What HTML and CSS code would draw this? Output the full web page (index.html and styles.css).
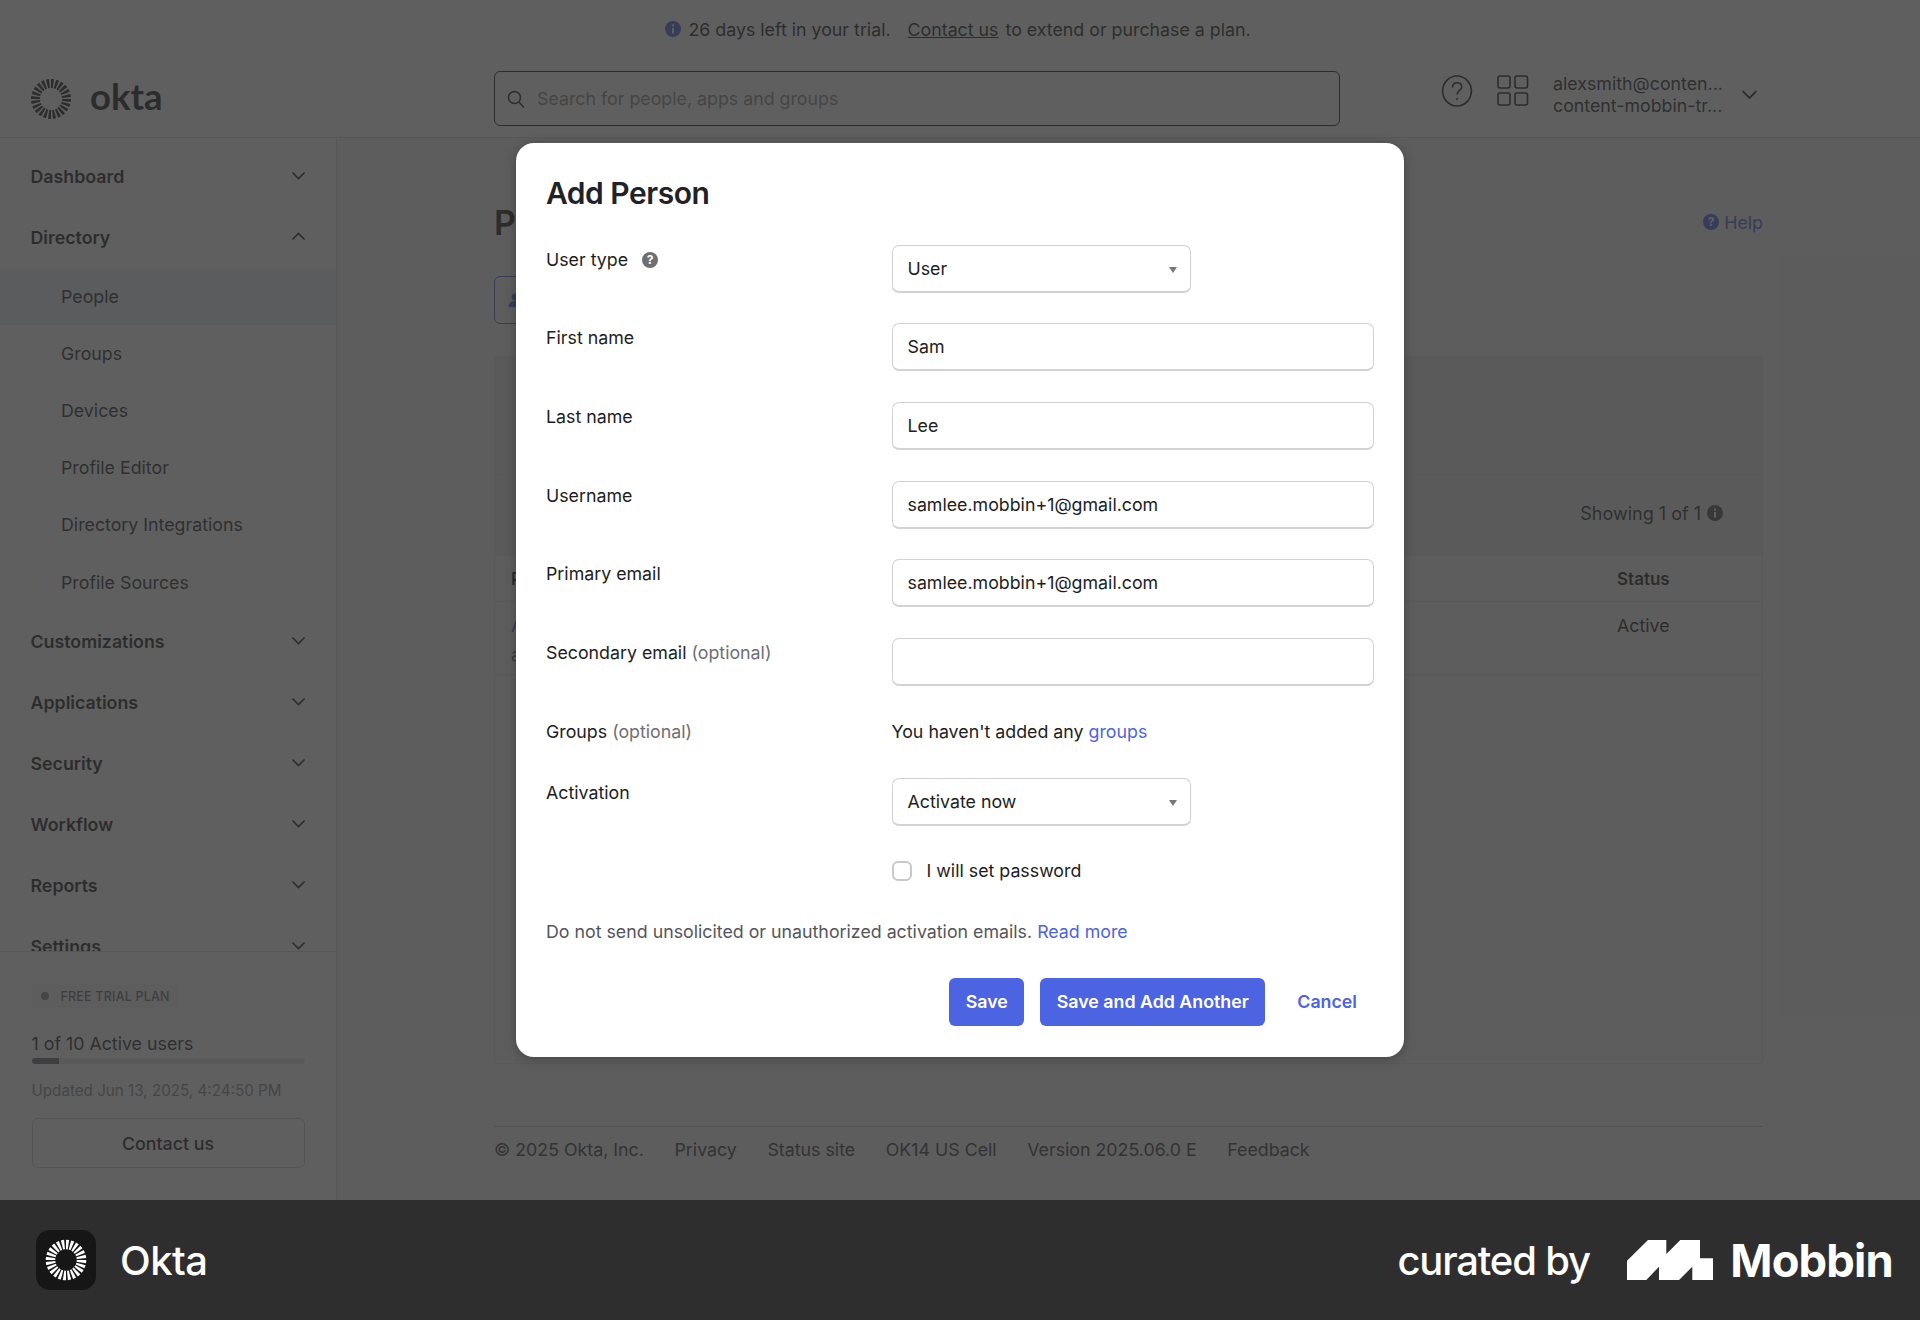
FILE: index.html
```html
<!DOCTYPE html>
<html lang="en">
<head>
<meta charset="utf-8">
<title>Okta - Add Person</title>
<link rel="stylesheet" href="styles.css">
</head>
<body>
<div class="app">
  <div class="banner"><svg class="ic16" viewBox="0 0 16 16"><circle cx="8" cy="8" r="8" fill="#4c64e2"/><rect x="7" y="7" width="2" height="5.500" fill="#fff"/><rect x="7" y="3.500" width="2" height="2" fill="#fff"/></svg><span>26 days left in your trial.</span><a class="banner-link">Contact us</a><span class="banner-tail">to extend or purchase a plan.</span></div>
  <header class="topbar">
    <div class="brand">
      <svg class="sun" viewBox="0 0 42 42"><circle cx="21" cy="21" r="15.500" fill="none" stroke="#1d1d21" stroke-width="9" pathLength="96" stroke-dasharray="2.400 1.600"/></svg>
      <span class="wordmark">okta</span>
    </div>
    <div class="search">
      <svg class="search-ic" viewBox="0 0 20 20" fill="none" stroke="#1d1d21" stroke-width="1.500"><circle cx="8.500" cy="8.500" r="6"/><path d="M13 13l5 5.500"/></svg>
      <span>Search for people, apps and groups</span>
    </div>
    <div class="top-right">
      <svg class="help-ic" viewBox="0 0 32 32" fill="none" stroke="#1d1d21" stroke-width="1.600"><ellipse cx="16" cy="16" rx="14.400" ry="15"/><path d="M11.500 12.500c0-3 2-4.800 4.700-4.800s4.500 1.800 4.500 4.200c0 3.600-4.600 3.600-4.600 7.600"/><circle cx="16" cy="24" r="1" fill="#1d1d21" stroke="none"/></svg>
      <svg class="grid-ic" viewBox="0 0 32 32" fill="none" stroke="#1d1d21" stroke-width="1.600"><rect x="1" y="1" width="12" height="12" rx="2"/><rect x="18" y="1" width="12.500" height="12" rx="2"/><rect x="1" y="18" width="12" height="12" rx="2"/><rect x="18" y="18" width="12.500" height="12" rx="2"/></svg>
      <div class="account"><div>alexsmith@conten...</div><div>content-mobbin-tr...</div></div>
      <svg class="chev chev-top" viewBox="0 0 14 14"><path d="M2 4.500l5 5 5-5"/></svg>
    </div>
  </header>
  <div class="body">
    <aside class="sidebar">
      <nav class="nav">
        <div class="nav-sec"><span>Dashboard</span><svg class="chev" viewBox="0 0 14 14"><path d="M2 4.500l5 5 5-5"/></svg></div>
        <div class="nav-sec"><span>Directory</span><svg class="chev" viewBox="0 0 14 14"><path d="M2 9.500l5-5 5 5"/></svg></div>
        <div class="nav-sub is-active">People</div>
        <div class="nav-sub">Groups</div>
        <div class="nav-sub">Devices</div>
        <div class="nav-sub">Profile Editor</div>
        <div class="nav-sub">Directory Integrations</div>
        <div class="nav-sub">Profile Sources</div>
        <div class="nav-sec"><span>Customizations</span><svg class="chev" viewBox="0 0 14 14"><path d="M2 4.500l5 5 5-5"/></svg></div>
        <div class="nav-sec"><span>Applications</span><svg class="chev" viewBox="0 0 14 14"><path d="M2 4.500l5 5 5-5"/></svg></div>
        <div class="nav-sec"><span>Security</span><svg class="chev" viewBox="0 0 14 14"><path d="M2 4.500l5 5 5-5"/></svg></div>
        <div class="nav-sec"><span>Workflow</span><svg class="chev" viewBox="0 0 14 14"><path d="M2 4.500l5 5 5-5"/></svg></div>
        <div class="nav-sec"><span>Reports</span><svg class="chev" viewBox="0 0 14 14"><path d="M2 4.500l5 5 5-5"/></svg></div>
        <div class="nav-sec"><span>Settings</span><svg class="chev" viewBox="0 0 14 14"><path d="M2 4.500l5 5 5-5"/></svg></div>
      </nav>
      <div class="plan">
        <div class="pill"><i class="pill-dot"></i>FREE TRIAL PLAN</div>
        <div class="plan-count">1 of 10 Active users</div>
        <div class="bar"><div class="bar-fill"></div></div>
        <div class="plan-date">Updated Jun 13, 2025, 4:24:50 PM</div>
        <div class="plan-btn">Contact us</div>
      </div>
    </aside>
    <main class="content">
      <div class="page-head">
        <h1 class="page-title">People</h1>
        <a class="page-help"><svg class="ic16" viewBox="0 0 16 16"><circle cx="8" cy="8" r="8" fill="#4c64e2"/><text x="8" y="11.600" text-anchor="middle" class="q">?</text></svg>Help</a>
      </div>
      <div class="add-btn"><svg class="ic16" viewBox="0 0 16 16"><circle cx="8" cy="5" r="3.400" fill="#4c64e2"/><path d="M1.500 15c0-4 3-6 6.500-6s6.500 2 6.500 6z" fill="#4c64e2"/></svg>Add person</div>
      <section class="card">
        <div class="card-top"></div>
        <div class="card-status">
          <span>Showing 1 of 1</span>
          <svg class="ic16" viewBox="0 0 16 16"><circle cx="8" cy="8" r="8" fill="#1d1d21" opacity=".75"/><rect x="7" y="7" width="2" height="5.500" fill="#fff"/><rect x="7" y="3.500" width="2" height="2" fill="#fff"/></svg>
        </div>
        <div class="thead"><span>Person &amp; username</span><span class="col-status">Status</span></div>
        <div class="trow">
          <div class="person"><a>Alex Smith</a><span>alexsmith@content-mobbin.com</span></div>
          <span class="col-status">Active</span>
        </div>
      </section>
      <footer class="foot">
        <span>© 2025 Okta, Inc.</span><span>Privacy</span><span>Status site</span><span>OK14 US Cell</span><span>Version 2025.06.0 E</span><span>Feedback</span>
      </footer>
    </main>
  </div>
  <div class="overlay"></div>
  <form class="modal">
    <h2 class="modal-title">Add Person</h2>
    <div class="row"><div class="lbl">User type<svg class="ic-q" viewBox="0 0 16 16"><circle cx="8" cy="8" r="8" fill="#6e6e73"/><text x="8" y="11.800" text-anchor="middle" class="q">?</text></svg></div><div class="select">User<i class="caret"></i></div></div>
    <div class="row"><div class="lbl">First name</div><div class="input">Sam</div></div>
    <div class="row"><div class="lbl">Last name</div><div class="input">Lee</div></div>
    <div class="row"><div class="lbl">Username</div><div class="input">samlee.mobbin+1@gmail.com</div></div>
    <div class="row"><div class="lbl">Primary email</div><div class="input">samlee.mobbin+1@gmail.com</div></div>
    <div class="row"><div class="lbl">Secondary email <em>(optional)</em></div><div class="input"></div></div>
    <div class="row row-text"><div class="lbl">Groups <em>(optional)</em></div><div class="val">You haven't added any <a>groups</a></div></div>
    <div class="row row-activation"><div class="lbl">Activation</div><div class="select">Activate now<i class="caret"></i></div></div>
    <div class="row row-check"><div></div><label class="check"><i class="box"></i>I will set password</label></div>
    <p class="notice">Do not send unsolicited or unauthorized activation emails. <a>Read more</a></p>
    <div class="actions">
      <div class="btn">Save</div>
      <div class="btn">Save and Add Another</div>
      <a class="cancel">Cancel</a>
    </div>
  </form>
</div>
<div class="credit">
  <div class="credit-app">
    <div class="app-tile"><svg class="tile-sun" viewBox="0 0 42 42"><circle cx="21" cy="21" r="15.500" fill="none" stroke="#fff" stroke-width="9.500" pathLength="96" stroke-dasharray="2.500 1.500"/></svg></div>
    <span class="app-name">Okta</span>
  </div>
  <div class="credit-by">
    <span class="curated">curated by</span>
    <svg class="mobbin-mark" viewBox="0 0 86.500 40"><path fill="#fff" d="M0 40V20.700L21 0H39.300V14L53.300 0H73V18.300H86.500V40H65.300V26.700L52 40H32V26.700L19.300 40Z"/></svg>
    <span class="mobbin">Mobbin</span>
  </div>
</div>
</body>
</html>
```
FILE: styles.css
```css
* { box-sizing: border-box; }
html, body { margin: 0; padding: 0; }
body { width: 1920px; height: 1320px; overflow: hidden; font-family: Inter, "Noto Sans", sans-serif; font-size: 17.8px; color: #1d1d21; background: #fff; }
a { color: #4c64e2; }
.app { position: relative; height: 1200px; overflow: hidden; background: #fff; display: flex; flex-direction: column; }
.ic16 { width: 16px; height: 16px; flex: none; }
.q { font: 700 12px Inter, sans-serif; fill: #fff; }

.banner { height: 60px; display: flex; align-items: center; justify-content: center; gap: 7px; padding: 0 4px 2px 0; }
.banner-link { color: #1d1d21; text-decoration: underline; margin-left: 10px; }
.topbar { height: 78px; display: flex; align-items: center; border-bottom: 1px solid #d9d9d9; }
.brand { width: 494px; padding-left: 30px; display: flex; align-items: center; gap: 18px; }
.sun { width: 42px; height: 42px; }
.wordmark { font: 700 36.5px/42px Lato, sans-serif; margin-top: -5px; }
.search { width: 846px; height: 55px; border: 1.5px solid #1d1d21; border-radius: 6px; display: flex; align-items: center; gap: 11px; padding-left: 11px; color: #8c8c90; }
.search-ic { width: 20px; height: 20px; }
.top-right { display: flex; align-items: center; margin: -15px 0 0 101px; }
.help-ic { width: 32px; height: 32px; }
.grid-ic { width: 32px; height: 32px; margin-left: 24px; }
.account { margin: 7px 0 0 24px; line-height: 22px; color: #2b2b30; white-space: nowrap; }
.chev { width: 17px; height: 17px; fill: none; stroke: #1d1d21; stroke-width: 1.3; flex: none; }
.chev-top { width: 19px; height: 19px; margin: 6px 0 0 17px; }

.body { flex: 1; display: flex; min-height: 0; }
.sidebar { width: 337px; flex: none; border-right: 1px solid #d9d9d9; display: flex; flex-direction: column; min-height: 0; }
.nav { height: 813px; overflow: hidden; padding-top: 8px; flex: none; }
.nav-sec { height: 61px; display: flex; align-items: center; justify-content: space-between; padding: 0 30px 0 30.5px; font-weight: 600; }
.nav-sec .chev { margin: -2px -1px 0 0; }
.nav-sub { height: 57.1px; display: flex; align-items: center; padding-left: 61px; color: #2b2b30; }
.is-active { background: #eef1f8; }
.plan { flex: 1; border-top: 1px solid #d9d9d9; background: #fff; padding: 31px 30px 0 31.5px; }
.pill { display: inline-flex; align-items: center; gap: 12px; height: 24px; padding: 0 9px; background: #f5f5f5; border-radius: 4px; font-size: 12.5px; font-weight: 500; letter-spacing: .2px; color: #6e6e73; }
.pill-dot { width: 8px; height: 8px; border-radius: 50%; background: #8c8c90; }
.plan-count { margin-top: 25px; line-height: 22px; color: #2b2b30; }
.bar { height: 6px; margin-top: 3px; width: 273px; background: #e4e4e4; border-radius: 3px; overflow: hidden; }
.bar-fill { width: 10%; height: 100%; background: #6e6e73; }
.plan-date { margin-top: 17px; font-size: 15.2px; line-height: 20px; color: #8c8c90; }
.plan-btn { margin-top: 17px; height: 50px; width: 273px; border: 1px solid #cfcfcf; border-radius: 6px; display: flex; align-items: center; justify-content: center; font-weight: 500; color: #1d1d21; }

.content { flex: 1; padding: 0 157px; min-width: 0; background: #f3f3f3; }
.page-head { display: flex; justify-content: space-between; align-items: center; height: 48px; margin-top: 60px; }
.page-title { margin: 0; font-size: 34px; font-weight: 600; }
.page-help { display: flex; align-items: center; gap: 5px; }
.add-btn { margin-top: 30px; width: 150px; height: 48px; border: 1.5px solid #4c64e2; border-radius: 6px; display: flex; align-items: center; gap: 8px; padding-left: 12px; color: #4c64e2; }
.card { margin-top: 32px; height: 708px; border: 1px solid #e4e4e4; border-radius: 4px; background: #f4f4f4; }
.card-top { height: 118px; background: #e9e9e9; border-bottom: 1px solid #e0e0e0; }
.card-status { height: 80px; display: flex; align-items: center; justify-content: flex-end; gap: 6px; padding: 0 39px 4px 0; background: #e9e9e9; color: #2b2b30; font-size: 18px; }
.thead { height: 47px; display: flex; align-items: center; justify-content: space-between; padding: 0 93px 0 16px; background: #f4f4f4; border-bottom: 1px solid #e0e0e0; border-top: 1px solid #e8e8e8; font-weight: 600; font-size: 17px; }
.trow { height: 73px; display: flex; justify-content: space-between; padding: 13px 93px 0 16px; border-bottom: 1px solid #e0e0e0; }
.person { display: flex; flex-direction: column; gap: 8px; }
.person span { color: #6e6e73; }
.col-status { width: 52px; white-space: nowrap; }
.foot { margin-top: 62px; border-top: 1px solid #c6c6c6; padding-top: 12px; display: flex; gap: 30.6px; line-height: 22px; color: #3a3a3f; }

.overlay { position: absolute; inset: 0; background: rgba(49, 49, 49, .775); }
.modal { position: absolute; left: 516px; top: 143px; width: 888px; height: 914px; background: #fff; border-radius: 18px; padding: 30px 30px 0; box-shadow: 0 2px 12px rgba(0, 0, 0, .25); }
.modal-title { margin: 0 0 31.5px; font-size: 30px; line-height: 40px; font-weight: 600; letter-spacing: -0.5px; color: #222226; }
.row { display: grid; grid-template-columns: 345.5px 1fr; height: 48px; margin-bottom: 30.7px; }
.lbl { color: #1d1d21; line-height: 30px; white-space: nowrap; }
.lbl em { font-style: normal; color: #6e6e73; }
.ic-q { width: 16px; height: 16px; margin-left: 14px; vertical-align: -2px; }
.select, .input { height: 48px; border: 1.5px solid #d2d2d6; border-bottom-width: 2px; border-radius: 7px; display: flex; align-items: center; padding-left: 15px; color: #1d1d21; background: #fff; }
.select { width: 299px; position: relative; }
.input { width: 482px; }
.caret { position: absolute; right: 13px; top: 21px; border-left: 4px solid transparent; border-right: 4px solid transparent; border-top: 6px solid #77777c; }
.row-text { height: 30px; margin-bottom: 31px; }
.val { line-height: 30px; white-space: nowrap; }
.row-activation { margin-bottom: 31px; }
.row-check { height: 28px; margin-bottom: 0; }
.check { display: flex; align-items: center; gap: 15px; height: 28px; }
.box { width: 20px; height: 20px; border: 2px solid #c8c8cc; border-radius: 6px; background: #fff; }
.notice { margin: 33px 0 0; line-height: 28px; color: #55555a; }
.actions { display: flex; align-items: center; justify-content: flex-end; margin-top: 32px; padding-right: 17px; }
.btn { height: 48px; padding: 0 16.5px; background: #4c64e2; color: #fff; font-weight: 600; border-radius: 6px; display: flex; align-items: center; margin-left: 16px; }
.cancel { margin-left: 32px; font-weight: 600; }

.credit { height: 120px; background: #2e2e2e; display: flex; align-items: center; justify-content: space-between; padding: 0 27px 0 36px; color: #fff; }
.credit-app { display: flex; align-items: center; gap: 24px; }
.app-tile { width: 60px; height: 60px; border-radius: 14px; background: #161616; display: flex; align-items: center; justify-content: center; }
.tile-sun { width: 42px; height: 42px; }
.app-name { font-size: 40px; font-weight: 500; letter-spacing: -0.5px; }
.credit-by { display: flex; align-items: center; }
.curated { font-size: 40px; font-weight: 500; letter-spacing: -1.2px; margin-right: 37px; }
.mobbin-mark { width: 86.5px; height: 40px; margin-right: 17px; }
.mobbin { font-size: 45.3px; font-weight: 700; letter-spacing: -0.8px; }
```
